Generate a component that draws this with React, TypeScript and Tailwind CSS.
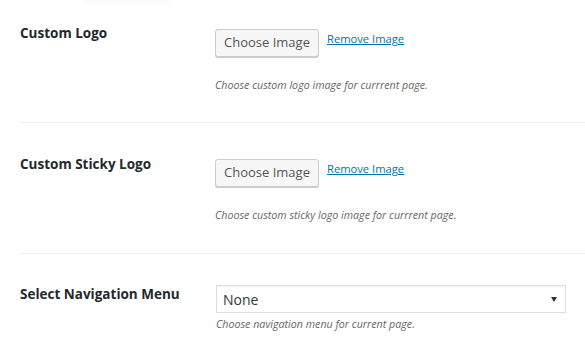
import type { ReactNode } from "react";

const font = { fontFamily: '"Open Sans", "Noto Sans", sans-serif' };

function ChooseButton() {
  return (
    <button className="h-[28px] w-[104px] rounded-[3px] border border-[#cccccc] bg-[#f7f7f7] text-[13px] text-[#555555] shadow-[0_1px_0_#cccccc]">
      Choose Image
    </button>
  );
}

function ImageField({ helper }: { helper: string }) {
  return (
    <div>
      <div className="flex items-start">
        <ChooseButton />
        <a className="ml-[8px] mt-0 text-[11.2px] leading-[20px] text-[#0073aa] underline" href="#">
          Remove Image
        </a>
      </div>
      <p className="mt-[20px] text-[10.7px] italic leading-[16px] text-[#666666]">{helper}</p>
    </div>
  );
}

interface RowProps {
  label: string;
  labelPad: string;
  fieldPad: string;
  rowClass: string;
  children: ReactNode;
}

function Row({ label, labelPad, fieldPad, rowClass, children }: RowProps) {
  return (
    <div className={`ml-5 flex ${rowClass}`}>
      <div className={`w-[195px] shrink-0 ${labelPad}`}>
        <div className="text-[13.5px] font-bold leading-[20px] text-[#23282d]">{label}</div>
      </div>
      <div className={fieldPad}>{children}</div>
    </div>
  );
}

export default function App() {
  return (
    <div className="h-[354px] w-[585px] overflow-hidden bg-white" style={font}>
      <div className="ml-[84px] h-[3px] w-[86px] rounded-b bg-[#fbfbfb]" />

      <Row
        label="Custom Logo"
        labelPad="pt-[20px]"
        fieldPad="pt-[26px]"
        rowClass="border-b border-[#eeeeee] pb-[29px]"
      >
        <ImageField helper="Choose custom logo image for currrent page." />
      </Row>

      <Row
        label="Custom Sticky Logo"
        labelPad="pt-[31px]"
        fieldPad="pt-[36px]"
        rowClass="border-b border-[#eeeeee] pb-[30px]"
      >
        <ImageField helper="Choose custom sticky logo image for currrent page." />
      </Row>

      <Row label="Select Navigation Menu" labelPad="pt-[30px]" fieldPad="pt-[31px]" rowClass="">
        <div className="ml-[1px]">
          <div className="flex h-[28px] w-[350px] items-center justify-between border border-[#dddddd] pl-[6px] pr-[8px] shadow-[inset_0_1px_2px_rgba(0,0,0,0.04)]">
            <span className="text-[14px] text-[#32373c]">None</span>
            <svg width="6" height="5" viewBox="0 0 6 5">
              <path d="M0 0h6L3 5z" fill="#333333" />
            </svg>
          </div>
          <p className="mt-[3px] text-[10.7px] italic leading-[16px] text-[#666666]">
            Choose navigation menu for current page.
          </p>
        </div>
      </Row>
    </div>
  );
}
